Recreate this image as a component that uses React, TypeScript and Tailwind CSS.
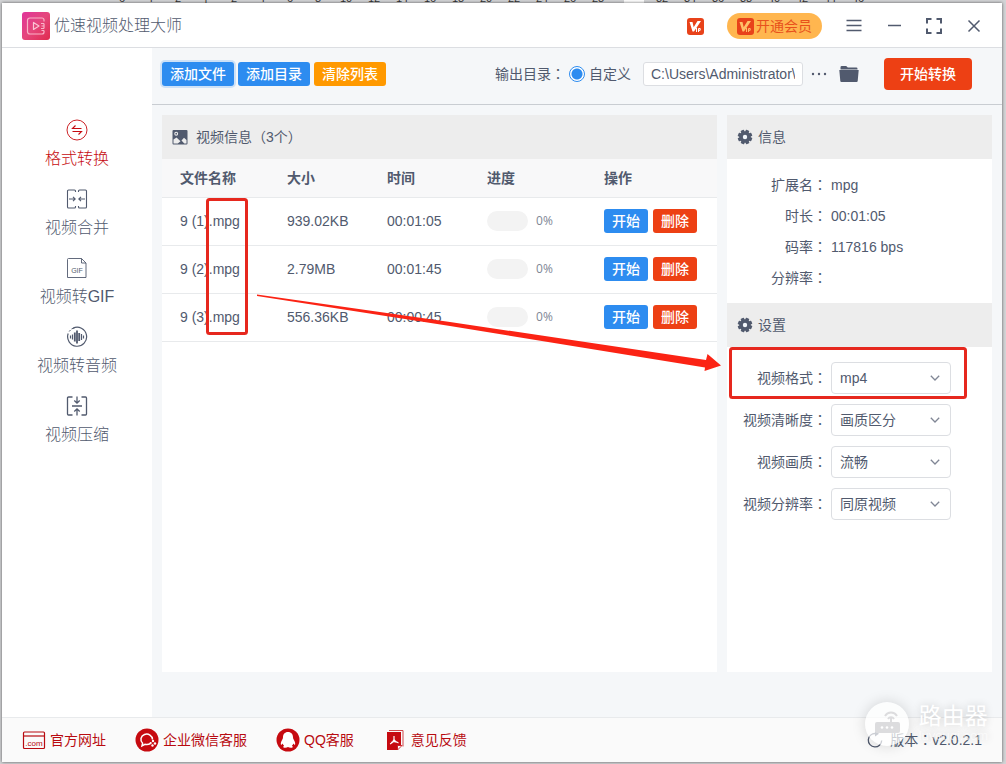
import type { ReactNode } from 'react';

type IconProps = { className?: string };

const files = [
  { name: '9 (1).mpg', size: '939.02KB', time: '00:01:05', progress: 0 },
  { name: '9 (2).mpg', size: '2.79MB', time: '00:01:45', progress: 0 },
  { name: '9 (3).mpg', size: '556.36KB', time: '00:00:45', progress: 0 },
];

const info = [
  { label: '扩展名', value: 'mpg' },
  { label: '时长', value: '00:01:05' },
  { label: '码率', value: '117816 bps' },
  { label: '分辨率', value: '' },
];

const settings = [
  { id: 'format', label: '视频格式', value: 'mp4' },
  { id: 'clarity', label: '视频清晰度', value: '画质区分' },
  { id: 'quality', label: '视频画质', value: '流畅' },
  { id: 'resolution', label: '视频分辨率', value: '同原视频' },
];

const rulerLeft = ['6', '4', '2', '|', '2', '4', '6', '8', '10', '12', '14', '16', '18', '20', '22', '24', '26', '28'];
const rulerRight = ['32', '34', '36', '38', '40', '42', '44', '46'];

// Full-width colon, centred in its cell
function Colon() {
  return <span className="font-['Noto_Sans_CJK_TC',sans-serif] leading-none">：</span>;
}

function LogoIcon() {
  return (
    <svg className="h-7 w-7" viewBox="0 0 28 28" fill="none">
      <defs>
        <linearGradient id="logo" x1="0" y1="0" x2="1" y2="1">
          <stop offset="0" stopColor="#e0359b" />
          <stop offset="0.5" stopColor="#e5477c" />
          <stop offset="1" stopColor="#e02a4e" />
        </linearGradient>
      </defs>
      <rect width="28" height="28" rx="3" fill="url(#logo)" />
      <path
        d="M22 9.500V8a2 2 0 0 0-2-2H8a2.500 2.500 0 0 0-2.500 2.500v11A2.500 2.500 0 0 0 8 22h12a2 2 0 0 0 2-2v-1.500M22 11.500v5M19 11.500h3M19.500 14h2.500M19 16.500h3M19.500 18.500h2.500"
        stroke="#f9b4c8"
        strokeWidth="1.200"
      />
      <path d="M11.500 10.500v7l5.500-3.500z" stroke="#fbc6d5" strokeWidth="1.200" strokeLinejoin="round" />
    </svg>
  );
}

function VipIcon({ light = '#fff' }: { light?: string }) {
  return (
    <svg className="h-[17px] w-[17px]" viewBox="0 0 17 17" fill="none">
      <rect width="17" height="17" rx="3" fill="#e8421a" />
      <path d="M2.500 4h3l1.200 5.200L10.500 3H14L7 13.500H5.500z" fill={light} />
      <path d="M9.500 10v4M11.500 14v-3.500h1.700v1.800h-1.700" stroke={light} strokeWidth="1" />
    </svg>
  );
}

function ConvertIcon() {
  return (
    <svg className="h-[22px] w-[22px]" viewBox="0 0 22 22" fill="none" stroke="currentColor" strokeWidth="0.900">
      <circle cx="11" cy="11" r="10" />
      <path d="M15.500 9.500h-9l3-3M6.500 12.500h9l-3 3" strokeWidth="1.100" />
    </svg>
  );
}

function MergeIcon() {
  return (
    <svg className="h-[22px] w-[22px]" viewBox="0 0 22 22" fill="none" stroke="currentColor" strokeWidth="1.100">
      <path d="M9.500 4V3a1 1 0 0 0-1-1H2.500a1 1 0 0 0-1 1v16a1 1 0 0 0 1 1h6a1 1 0 0 0 1-1v-1M12.500 4V3a1 1 0 0 1 1-1h6a1 1 0 0 1 1 1v16a1 1 0 0 1-1 1h-6a1 1 0 0 1-1-1v-1" />
      <path d="M3 11h6M7 8.800 9.200 11 7 13.200M19 11h-6M15 8.800 12.800 11l2.200 2.200" />
    </svg>
  );
}

function GifIcon() {
  return (
    <svg className="h-[22px] w-[22px]" viewBox="0 0 22 22" fill="none" stroke="currentColor" strokeWidth="0.900">
      <path d="M15.500 1.500h-13a1 1 0 0 0-1 1v18h18.500v-14.500zM15.500 1.500V6H20" />
      <text x="11" y="15.500" textAnchor="middle" fontSize="7" fill="currentColor" stroke="none">
        GIF
      </text>
    </svg>
  );
}

function AudioIcon() {
  return (
    <svg className="h-[22px] w-[22px]" viewBox="0 0 22 22" fill="none" stroke="currentColor">
      <path d="M7 2.200A9.500 9.500 0 1 1 2.200 7.500" strokeWidth="1.200" />
      <path d="M9 1.500 5.500 3M4.500 4 3.200 5.500" strokeWidth="1" />
      <path d="M4.500 9.500v3M6.500 8.500v5M15.500 8v6M17.500 9.500v3" strokeWidth="1.200" />
      <path d="M8.800 6.500v9M11 4.500v13M13.200 7v8" strokeWidth="1.800" />
    </svg>
  );
}

function CompressIcon() {
  return (
    <svg className="h-[22px] w-[22px]" viewBox="0 0 22 22" fill="none" stroke="currentColor" strokeWidth="1.300">
      <path d="M6.500 2H2.500a1 1 0 0 0-1 1v16a1 1 0 0 0 1 1h4M15.500 2h4a1 1 0 0 1 1 1v16a1 1 0 0 1-1 1h-4M6 11h10" />
      <path d="M11 1.500v6.500M8.300 5.500 11 8.200l2.700-2.700M11 20.500v-6.500M8.300 16.500 11 13.800l2.700 2.700" />
    </svg>
  );
}

function ImageIcon() {
  return (
    <svg className="h-4 w-4" viewBox="0 0 16 16">
      <rect x="0.500" y="1" width="15" height="14.500" rx="1" fill="#515a6e" />
      <circle cx="4.200" cy="4.700" r="1.400" fill="none" stroke="#ededed" strokeWidth="1.100" />
      <path d="M1.500 14.500v-4L4.500 8.500l4 3.800-2.700 2.200zM9.500 11.500l2.500-2.800 2.500 2.300v3.500h-2.200z" fill="#ededed" />
    </svg>
  );
}

function GearIcon() {
  return (
    <svg className="h-4 w-4" viewBox="0 0 16 16" fill="#515a6e">
      {[0, 45, 90, 135].map((angle) => (
        <rect key={angle} x="6.200" y="0.700" width="3.600" height="14.600" rx="0.600" transform={`rotate(${angle + 22} 8 8)`} />
      ))}
      <circle cx="8" cy="8" r="5.800" />
      <circle cx="8" cy="8" r="2.200" fill="#f4f8fc" />
    </svg>
  );
}

function FolderIcon() {
  return (
    <svg className="h-[18px] w-5" viewBox="0 0 20 18" fill="#515a6e">
      <path d="M1.500 4V2.200A1.200 1.200 0 0 1 2.700 1h4.500l1.600 1.500h8.500a1.200 1.200 0 0 1 1.200 1.200V4.400h-17z" />
      <path d="M0.300 5h19.400l-1 11a1.100 1.100 0 0 1-1.100 1H2.400a1.100 1.100 0 0 1-1.100-1z" />
    </svg>
  );
}

function ChevronIcon({ className }: IconProps) {
  return (
    <svg className={className} viewBox="0 0 10 10" fill="none" stroke="#808695" strokeWidth="1.300">
      <path d="M0.800 2.800 5 7l4.200-4.200" />
    </svg>
  );
}

function SiteIcon() {
  return (
    <svg className="h-6 w-6" viewBox="0 0 24 24" fill="none" stroke="currentColor" strokeWidth="1.200">
      <rect x="1.500" y="4" width="21" height="16.500" rx="1" />
      <path d="M1.500 8h21" />
      <text x="12" y="18" textAnchor="middle" fontSize="8" fill="currentColor" stroke="none">
        .com
      </text>
    </svg>
  );
}

function WechatIcon() {
  return (
    <svg className="h-6 w-6" viewBox="0 0 24 24" fill="none">
      <circle cx="12" cy="12" r="11.500" fill="#c60a10" />
      <path
        d="M15.500 15.500a7 6 0 0 1-5.500.8L7 17.800l.6-2.600a5.800 5.300 0 1 1 9.900-3.700"
        stroke="#fff"
        strokeWidth="1.500"
      />
      <circle cx="18" cy="13" r="1.200" fill="#fff" />
      <circle cx="20" cy="15.500" r="1.200" fill="#fff" />
      <circle cx="17.500" cy="17.500" r="1.200" fill="#fff" />
      <circle cx="15.700" cy="15" r="1.100" fill="#fff" />
    </svg>
  );
}

function QqIcon() {
  return (
    <svg className="h-6 w-6" viewBox="0 0 24 24">
      <circle cx="12" cy="12" r="11.500" fill="#c60a10" />
      <path
        d="M12 4c-3.300 0-5 2.300-5 5.200 0 1-.2 1.700-.8 2.600-1 1.600-1.700 3.300-1.300 4.700.3.800 1-.1 1.700-1 .3 1 .8 1.700 1.500 2.300-1 .4-1.300 1.800.2 2 1.400.2 2.900-.1 3.700-.7.800.6 2.300.9 3.700.7 1.500-.2 1.200-1.600.2-2 .7-.6 1.200-1.300 1.500-2.300.7.900 1.400 1.800 1.700 1 .4-1.400-.3-3.100-1.300-4.700-.6-.9-.8-1.600-.8-2.600C17 6.300 15.300 4 12 4z"
        fill="#fff"
      />
    </svg>
  );
}

function FeedbackIcon() {
  return (
    <svg className="h-6 w-6" viewBox="0 0 24 24" fill="none">
      <path d="M6 2.500h14v16" stroke="#d0474b" strokeWidth="1" />
      <path d="M4 4h14v13l-4 5H4z" fill="#c60a10" />
      <path d="M14.500 22v-4.500H19z" fill="#fff" stroke="#c60a10" strokeWidth="0.800" />
      <path d="M11 8v3.500c-.8 2.200-2 3.800-4 4.500M11 11.500c1 2 2.300 3 4.500 3.300M8 14.300c2-.8 4-.9 6 0" stroke="#fff" strokeWidth="1.200" />
    </svg>
  );
}

function RefreshIcon() {
  return (
    <svg className="h-[18px] w-[18px]" viewBox="0 0 18 18" fill="none">
      <path d="M9.500 2.500A6.700 6.700 0 1 0 15.700 9.500" stroke="#515a6e" strokeWidth="1.300" />
      <path d="M9 0v5.500l4-2.700z" fill="#515a6e" />
    </svg>
  );
}

const menu = [
  { label: '格式转换', icon: <ConvertIcon />, active: true },
  { label: '视频合并', icon: <MergeIcon /> },
  { label: '视频转GIF', icon: <GifIcon /> },
  { label: '视频转音频', icon: <AudioIcon /> },
  { label: '视频压缩', icon: <CompressIcon /> },
];

const links = [
  { label: '官方网址', icon: <SiteIcon /> },
  { label: '企业微信客服', icon: <WechatIcon /> },
  { label: 'QQ客服', icon: <QqIcon /> },
  { label: '意见反馈', icon: <FeedbackIcon /> },
];

function Ruler() {
  return (
    <div className="flex h-[3px] items-end overflow-hidden pl-[108px] text-[11px] leading-[10px] text-[#333333]">
      {rulerLeft.map((n, i) => (
        <span key={i} className="w-7 shrink-0 text-center">{n}</span>
      ))}
      <span className="mr-1 ml-3 h-full w-5 shrink-0 bg-white" />
      {rulerRight.map((n) => (
        <span key={n} className="w-7 shrink-0 text-center">{n}</span>
      ))}
    </div>
  );
}

function TitleBar() {
  return (
    <header className="flex h-[45px] shrink-0 items-center border-b border-[#dcdee2] bg-white pt-0.5 pr-[18px] pl-5">
      <LogoIcon />
      <h1 className="ml-1 text-base font-light">优速视频处理大师</h1>
      <div className="ml-auto flex items-center">
        <VipIcon />
        <button className="ml-[23px] flex h-[26px] items-center gap-0.5 rounded-full bg-[#ffb64f] px-2.5 text-sm text-[#e8511c]">
          <VipIcon light="#ffc069" />
          开通会员
        </button>
        <div className="ml-[22px] flex gap-5">
          <button aria-label="菜单">
            <svg className="h-5 w-5" viewBox="0 0 20 20" stroke="#515a6e" strokeWidth="1.500">
              <path d="M2.500 4.500h15M2.500 9.500h15M2.500 14.500h15" />
            </svg>
          </button>
          <button aria-label="最小化">
            <svg className="h-5 w-5" viewBox="0 0 20 20" stroke="#515a6e" strokeWidth="1.500">
              <path d="M4 9.500h13" />
            </svg>
          </button>
          <button aria-label="最大化">
            <svg className="h-5 w-5" viewBox="0 0 20 20" fill="none" stroke="#515a6e" strokeWidth="2">
              <path d="M3 7.500V3h4.500M12.500 3H17v4.500M17 12.500V17h-4.500M7.500 17H3v-4.500" />
            </svg>
          </button>
          <button aria-label="关闭">
            <svg className="h-5 w-5" viewBox="0 0 20 20" stroke="#515a6e" strokeWidth="1.500">
              <path d="M4.500 4.500l11 11M15.500 4.500l-11 11" />
            </svg>
          </button>
        </div>
      </div>
    </header>
  );
}

function Sidebar() {
  return (
    <nav className="flex w-[150px] shrink-0 flex-col gap-[17px] bg-white pt-[71px]">
      {menu.map((item) => (
        <a
          key={item.label}
          href="#"
          className={`flex flex-col items-center gap-1.5 text-base leading-6 font-light ${item.active ? 'text-[#c60a10]' : ''}`}
        >
          {item.icon}
          {item.label}
        </a>
      ))}
    </nav>
  );
}

function Toolbar() {
  return (
    <div className="flex h-[57px] shrink-0 items-center border-b border-[#c9cdd2] pr-5 pb-1 pl-2.5">
      <div className="flex gap-1 text-sm font-medium text-white">
        <button className="h-6 rounded-[3px] bg-[#2d8cf0] px-2 ring-2 ring-[#2d8cf0]/20">添加文件</button>
        <button className="h-6 rounded-[3px] bg-[#2d8cf0] px-2">添加目录</button>
        <button className="h-6 rounded-[3px] bg-[#ff9900] px-2">清除列表</button>
      </div>
      <div className="ml-auto flex items-center text-sm">
        <span>输出目录<Colon /></span>
        <label className="ml-1 flex items-center gap-1">
          <input
            type="radio"
            name="output"
            defaultChecked
            className="h-4 w-4 appearance-none rounded-full border border-[#2d8cf0] bg-white bg-[radial-gradient(circle,#2d8cf0_5px,transparent_6px)]"
          />
          自定义
        </label>
        <input
          type="text"
          aria-label="输出目录"
          defaultValue="C:\Users\Administrator\"
          className="ml-3 h-6 w-40 rounded-[3px] border border-[#dcdee2] bg-white px-[7px]"
        />
        <button aria-label="更多" className="ml-2">
          <svg className="h-4 w-4" viewBox="0 0 16 16" fill="#515a6e">
            <circle cx="2" cy="8" r="1.200" />
            <circle cx="8" cy="8" r="1.200" />
            <circle cx="14" cy="8" r="1.200" />
          </svg>
        </button>
        <button aria-label="打开目录" className="ml-3">
          <FolderIcon />
        </button>
        <button className="mr-2.5 ml-[25px] h-8 rounded bg-[#ed4014] px-4 font-medium text-white">开始转换</button>
      </div>
    </div>
  );
}

function PanelHeader({ icon, children }: { icon: ReactNode; children: ReactNode }) {
  return (
    <h2 className="flex h-11 items-center bg-[#ededed] px-2.5 pb-px text-sm">
      {icon}
      {children}
    </h2>
  );
}

function FileTable() {
  return (
    <table className="w-full table-fixed text-left text-sm">
      <colgroup>
        <col className="w-[107px]" />
        <col className="w-[100px]" />
        <col className="w-[100px]" />
        <col className="w-[117px]" />
        <col />
      </colgroup>
      <thead>
        <tr className="h-[38px] border-b border-[#e8eaec] bg-[#f8f8f9]">
          {['文件名称', '大小', '时间', '进度', '操作'].map((title) => (
            <th key={title} className="pl-[18px] font-bold">{title}</th>
          ))}
        </tr>
      </thead>
      <tbody>
        {files.map((file) => (
          <tr key={file.name} className="h-12 border-b border-[#e8eaec]">
            <td className="pl-[18px] whitespace-nowrap">{file.name}</td>
            <td className="pl-[18px]">{file.size}</td>
            <td className="pl-[18px]">{file.time}</td>
            <td className="pl-[18px]">
              <div className="flex items-center gap-2">
                <div className="h-5 w-[41px] overflow-hidden rounded-full bg-[#f3f3f3]">
                  <div className="h-full bg-[#2d8cf0]" style={{ width: `${file.progress}%` }} />
                </div>
                <span className="font-['Open_Sans',sans-serif] text-xs text-[#808695]">{file.progress}%</span>
              </div>
            </td>
            <td className="pl-[18px]">
              <div className="flex gap-[5px] font-medium text-white">
                <button className="h-6 rounded-[3px] bg-[#2d8cf0] px-2">开始</button>
                <button className="h-6 rounded-[3px] bg-[#ed4014] px-2">删除</button>
              </div>
            </td>
          </tr>
        ))}
      </tbody>
    </table>
  );
}

function InfoPanel() {
  return (
    <aside className="w-[265px] shrink-0 bg-white">
      <PanelHeader icon={<GearIcon />}>
        <span className="ml-[5px]">信息</span>
      </PanelHeader>
      <dl className="pt-2.5 pb-2.5 text-sm">
        {info.map((row) => (
          <div key={row.label} className="flex h-[31px] items-center gap-1">
            <dt className="w-[100px] text-right">{row.label}<Colon /></dt>
            <dd>{row.value}</dd>
          </div>
        ))}
      </dl>
      <PanelHeader icon={<GearIcon />}>
        <span className="ml-[5px]">设置</span>
      </PanelHeader>
      <div className="flex flex-col gap-2.5 pt-[15px] text-sm">
        {settings.map((row) => (
          <div key={row.id} className="flex items-center gap-1">
            <label htmlFor={row.id} className="w-[100px] text-right">{row.label}<Colon /></label>
            <div className="relative">
              <select
                id={row.id}
                defaultValue={row.value}
                className="h-8 w-[120px] appearance-none rounded border border-[#dcdee2] bg-white pr-6 pl-2"
              >
                <option>{row.value}</option>
              </select>
              <ChevronIcon className="pointer-events-none absolute top-[11px] right-[11px] h-2.5 w-2.5" />
            </div>
          </div>
        ))}
      </div>
    </aside>
  );
}

function Footer() {
  return (
    <footer className="flex h-[45px] shrink-0 items-center gap-[29px] border-t border-[#e8eaec] bg-[#fafafa] px-5 text-sm">
      {links.map((link) => (
        <a key={link.label} href="#" className="flex items-center gap-1 text-[#b80a10]">
          {link.icon}
          {link.label}
        </a>
      ))}
      <div className="ml-auto flex items-center gap-1.5">
        <RefreshIcon />
        <span>版本<Colon />v2.0.2.1</span>
      </div>
    </footer>
  );
}

// Red frames and arrow that point from the source type to the target format
function Marks() {
  return (
    <svg className="pointer-events-none absolute top-0 left-0 h-[420px] w-[1000px]" viewBox="0 0 1000 420">
      <g fill="none" stroke="#e6281e" strokeWidth="3">
        <rect x="207.500" y="199.500" width="39" height="134" rx="2" />
        <rect x="730.500" y="348.500" width="235" height="49" rx="2" />
      </g>
      <path d="M257 294.500L450 322L706 360L707.500 354L721 365.500L704.500 371L705 367.500L450 326L257 296z" fill="#fb2314" />
    </svg>
  );
}

function Watermark() {
  return (
    <div className="pointer-events-none absolute right-[18px] bottom-[18px] flex items-center gap-2.5">
      <svg className="h-11 w-11 rounded-full shadow-[0_0_14px_rgba(0,0,0,0.15)]" viewBox="0 0 44 44" fill="none">
        <circle cx="22" cy="22" r="22" fill="#fff" fillOpacity="0.700" />
        <rect x="10" y="20" width="25" height="11" rx="2" fill="#dcdcde" />
        <path d="M26 20v-5M20 14a7 7 0 0 1 12 0M23 17a3.500 3.500 0 0 1 6 0" stroke="#dcdcde" strokeWidth="2" />
        <circle cx="17" cy="25.500" r="1.300" fill="#fff" />
        <circle cx="22" cy="25.500" r="1.300" fill="#fff" />
        <circle cx="27" cy="25.500" r="1.300" fill="#fff" />
      </svg>
      <div className="[text-shadow:0_0_8px_rgba(0,0,0,0.2)]">
        <div className="text-[23px] leading-6 text-white">路由器</div>
        <div className="text-[13px] leading-4 text-white/60">luyouqi.com</div>
      </div>
    </div>
  );
}

export default function App() {
  return (
    <div className="relative flex min-h-screen flex-col bg-[#d3d4d6] font-['Liberation_Sans','Noto_Sans_CJK_SC',sans-serif] text-[#515a6e]">
      <Ruler />
      <div className="mr-1 mb-0.5 ml-0.5 flex flex-1 flex-col shadow-[0_0_3px_rgba(0,0,0,0.6)]">
        <TitleBar />
        <div className="flex flex-1">
          <Sidebar />
          <main className="flex min-w-0 flex-1 flex-col bg-[#f5f7f9]">
            <Toolbar />
            <div className="flex flex-1 gap-2.5 px-2.5 pt-2.5 pb-[45px]">
              <section className="min-w-0 flex-1 bg-white">
                <PanelHeader icon={<ImageIcon />}>
                  <span className="ml-2">视频信息（3个）</span>
                </PanelHeader>
                <FileTable />
              </section>
              <InfoPanel />
            </div>
          </main>
        </div>
        <Footer />
      </div>
      <Marks />
      <Watermark />
    </div>
  );
}
